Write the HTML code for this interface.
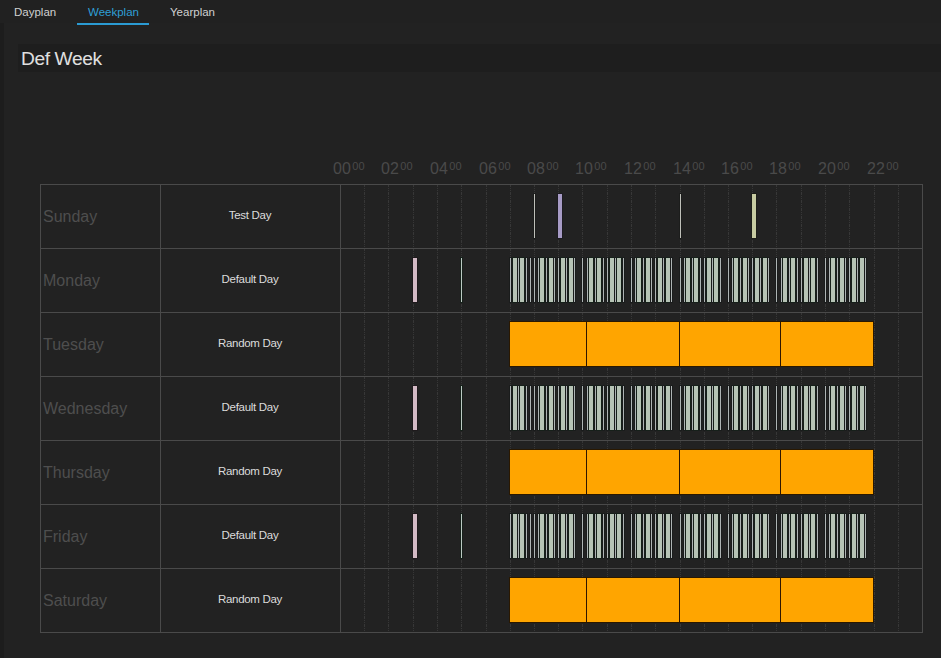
<!DOCTYPE html>
<html><head><meta charset="utf-8"><style>
html,body{margin:0;padding:0;width:941px;height:658px;overflow:hidden;background:#212121;font-family:"Liberation Sans",sans-serif;}
.strip{position:absolute;left:0;top:23px;width:4px;height:635px;background:#1d1d1d;}
.panel{position:absolute;left:4px;top:23px;width:937px;height:635px;background:#222222;}
.tab{position:absolute;top:5px;font-size:11.5px;line-height:14px;color:#d0d0d0;white-space:nowrap;}
.tab.act{color:#2f9fd6;}
.uline{position:absolute;left:77px;top:23px;width:72px;height:2px;background:#2b9bd3;}
.hdr{position:absolute;left:18px;top:44px;width:923px;height:28px;background:#1e1e1e;}
.hdrt{position:absolute;left:21px;top:48px;font-size:19.2px;letter-spacing:-0.4px;line-height:22px;color:#e0e0e0;white-space:nowrap;}
.tl{position:absolute;top:159px;font-size:16px;line-height:19px;color:#4a4a4a;white-space:nowrap;}
.tl sup{font-size:11px;vertical-align:0;position:relative;top:-4px;margin-left:1.5px;}
.dn{position:absolute;left:43px;font-size:16px;line-height:19px;color:#4e4e4e;white-space:nowrap;}
.pn{position:absolute;left:160px;width:180px;text-align:center;font-size:11.5px;letter-spacing:-0.3px;line-height:14px;color:#dcdcdc;white-space:nowrap;}
svg{position:absolute;left:0;top:0;}
</style></head><body>
<div class="strip"></div>
<div class="panel"></div>
<div class="tab" style="left:14px">Dayplan</div>
<div class="tab act" style="left:88px">Weekplan</div>
<div class="tab" style="left:170px">Yearplan</div>
<div class="uline"></div>
<div class="hdr"></div>
<div class="hdrt">Def Week</div>
<div class="tl" style="left:333px">00<sup>00</sup></div><div class="tl" style="left:381px">02<sup>00</sup></div><div class="tl" style="left:430px">04<sup>00</sup></div><div class="tl" style="left:479px">06<sup>00</sup></div><div class="tl" style="left:527px">08<sup>00</sup></div><div class="tl" style="left:575px">10<sup>00</sup></div><div class="tl" style="left:624px">12<sup>00</sup></div><div class="tl" style="left:673px">14<sup>00</sup></div><div class="tl" style="left:721px">16<sup>00</sup></div><div class="tl" style="left:769px">18<sup>00</sup></div><div class="tl" style="left:818px">20<sup>00</sup></div><div class="tl" style="left:867px">22<sup>00</sup></div>
<svg width="941" height="658" shape-rendering="crispEdges">
<defs><pattern id="dash" x="0" y="0" width="1" height="8" patternUnits="userSpaceOnUse">
<rect x="0" y="0" width="1" height="3" fill="#373737"/><rect x="0" y="4" width="1" height="1" fill="#373737"/><rect x="0" y="6" width="1" height="1" fill="#373737"/>
</pattern></defs>
<rect x="364" y="185" width="1" height="446" fill="url(#dash)"/><rect x="388" y="185" width="1" height="446" fill="url(#dash)"/><rect x="413" y="185" width="1" height="446" fill="url(#dash)"/><rect x="437" y="185" width="1" height="446" fill="url(#dash)"/><rect x="461" y="185" width="1" height="446" fill="url(#dash)"/><rect x="486" y="185" width="1" height="446" fill="url(#dash)"/><rect x="510" y="185" width="1" height="446" fill="url(#dash)"/><rect x="534" y="185" width="1" height="446" fill="url(#dash)"/><rect x="558" y="185" width="1" height="446" fill="url(#dash)"/><rect x="582" y="185" width="1" height="446" fill="url(#dash)"/><rect x="607" y="185" width="1" height="446" fill="url(#dash)"/><rect x="631" y="185" width="1" height="446" fill="url(#dash)"/><rect x="655" y="185" width="1" height="446" fill="url(#dash)"/><rect x="680" y="185" width="1" height="446" fill="url(#dash)"/><rect x="704" y="185" width="1" height="446" fill="url(#dash)"/><rect x="728" y="185" width="1" height="446" fill="url(#dash)"/><rect x="752" y="185" width="1" height="446" fill="url(#dash)"/><rect x="776" y="185" width="1" height="446" fill="url(#dash)"/><rect x="801" y="185" width="1" height="446" fill="url(#dash)"/><rect x="825" y="185" width="1" height="446" fill="url(#dash)"/><rect x="849" y="185" width="1" height="446" fill="url(#dash)"/><rect x="874" y="185" width="1" height="446" fill="url(#dash)"/><rect x="898" y="185" width="1" height="446" fill="url(#dash)"/><rect x="40" y="184" width="883" height="1" fill="#4a4a4a"/><rect x="40" y="248" width="883" height="1" fill="#4a4a4a"/><rect x="40" y="312" width="883" height="1" fill="#4a4a4a"/><rect x="40" y="376" width="883" height="1" fill="#4a4a4a"/><rect x="40" y="440" width="883" height="1" fill="#4a4a4a"/><rect x="40" y="504" width="883" height="1" fill="#4a4a4a"/><rect x="40" y="568" width="883" height="1" fill="#4a4a4a"/><rect x="40" y="632" width="883" height="1" fill="#4a4a4a"/><rect x="40" y="184" width="1" height="449" fill="#4a4a4a"/><rect x="160" y="184" width="1" height="449" fill="#4a4a4a"/><rect x="340" y="184" width="1" height="449" fill="#4a4a4a"/><rect x="922" y="184" width="1" height="449" fill="#4a4a4a"/><rect x="533" y="193" width="3" height="46" fill="#1c1d1c"/><rect x="557" y="193" width="6" height="46" fill="#1c1b20"/><rect x="679" y="193" width="3" height="46" fill="#1c1d1c"/><rect x="751" y="193" width="6" height="46" fill="#1c1d18"/><rect x="534" y="194" width="1" height="44" fill="#bfc0ba"/><rect x="558" y="194" width="4" height="44" fill="#a79bc6"/><rect x="680" y="194" width="1" height="44" fill="#bfc0ba"/><rect x="752" y="194" width="4" height="44" fill="#c7cba1"/><rect x="412" y="257" width="6" height="46" fill="#1e1a1c"/><rect x="460" y="257" width="3" height="46" fill="#16201a"/><rect x="509" y="257" width="3" height="46" fill="#1a1c1c"/><rect x="512" y="257" width="6" height="46" fill="#16201a"/><rect x="517" y="257" width="3" height="46" fill="#1a1c1c"/><rect x="519" y="257" width="6" height="46" fill="#16201a"/><rect x="525" y="257" width="3" height="46" fill="#1a1c1c"/><rect x="529" y="257" width="3" height="46" fill="#1a1c1c"/><rect x="533" y="257" width="3" height="46" fill="#1a1c1c"/><rect x="537" y="257" width="3" height="46" fill="#1a1c1c"/><rect x="539" y="257" width="6" height="46" fill="#16201a"/><rect x="545" y="257" width="3" height="46" fill="#1a1c1c"/><rect x="548" y="257" width="6" height="46" fill="#16201a"/><rect x="553" y="257" width="3" height="46" fill="#1a1c1c"/><rect x="557" y="257" width="3" height="46" fill="#1a1c1c"/><rect x="560" y="257" width="6" height="46" fill="#16201a"/><rect x="565" y="257" width="3" height="46" fill="#1a1c1c"/><rect x="568" y="257" width="6" height="46" fill="#16201a"/><rect x="573" y="257" width="3" height="46" fill="#1a1c1c"/><rect x="581" y="257" width="3" height="46" fill="#1a1c1c"/><rect x="586" y="257" width="3" height="46" fill="#1a1c1c"/><rect x="588" y="257" width="6" height="46" fill="#16201a"/><rect x="594" y="257" width="3" height="46" fill="#1a1c1c"/><rect x="596" y="257" width="6" height="46" fill="#16201a"/><rect x="602" y="257" width="3" height="46" fill="#1a1c1c"/><rect x="606" y="257" width="3" height="46" fill="#1a1c1c"/><rect x="609" y="257" width="6" height="46" fill="#16201a"/><rect x="614" y="257" width="3" height="46" fill="#1a1c1c"/><rect x="616" y="257" width="6" height="46" fill="#16201a"/><rect x="622" y="257" width="3" height="46" fill="#1a1c1c"/><rect x="630" y="257" width="3" height="46" fill="#1a1c1c"/><rect x="634" y="257" width="3" height="46" fill="#1a1c1c"/><rect x="636" y="257" width="6" height="46" fill="#16201a"/><rect x="642" y="257" width="3" height="46" fill="#1a1c1c"/><rect x="645" y="257" width="6" height="46" fill="#16201a"/><rect x="650" y="257" width="3" height="46" fill="#1a1c1c"/><rect x="654" y="257" width="3" height="46" fill="#1a1c1c"/><rect x="657" y="257" width="6" height="46" fill="#16201a"/><rect x="662" y="257" width="3" height="46" fill="#1a1c1c"/><rect x="665" y="257" width="6" height="46" fill="#16201a"/><rect x="670" y="257" width="3" height="46" fill="#1a1c1c"/><rect x="679" y="257" width="3" height="46" fill="#1a1c1c"/><rect x="683" y="257" width="3" height="46" fill="#1a1c1c"/><rect x="685" y="257" width="6" height="46" fill="#16201a"/><rect x="691" y="257" width="3" height="46" fill="#1a1c1c"/><rect x="693" y="257" width="6" height="46" fill="#16201a"/><rect x="699" y="257" width="3" height="46" fill="#1a1c1c"/><rect x="703" y="257" width="3" height="46" fill="#1a1c1c"/><rect x="706" y="257" width="6" height="46" fill="#16201a"/><rect x="711" y="257" width="3" height="46" fill="#1a1c1c"/><rect x="713" y="257" width="6" height="46" fill="#16201a"/><rect x="719" y="257" width="3" height="46" fill="#1a1c1c"/><rect x="727" y="257" width="3" height="46" fill="#1a1c1c"/><rect x="731" y="257" width="3" height="46" fill="#1a1c1c"/><rect x="733" y="257" width="6" height="46" fill="#16201a"/><rect x="739" y="257" width="3" height="46" fill="#1a1c1c"/><rect x="742" y="257" width="6" height="46" fill="#16201a"/><rect x="747" y="257" width="3" height="46" fill="#1a1c1c"/><rect x="751" y="257" width="3" height="46" fill="#1a1c1c"/><rect x="754" y="257" width="6" height="46" fill="#16201a"/><rect x="759" y="257" width="3" height="46" fill="#1a1c1c"/><rect x="762" y="257" width="6" height="46" fill="#16201a"/><rect x="767" y="257" width="3" height="46" fill="#1a1c1c"/><rect x="775" y="257" width="3" height="46" fill="#1a1c1c"/><rect x="780" y="257" width="3" height="46" fill="#1a1c1c"/><rect x="782" y="257" width="6" height="46" fill="#16201a"/><rect x="788" y="257" width="3" height="46" fill="#1a1c1c"/><rect x="790" y="257" width="6" height="46" fill="#16201a"/><rect x="796" y="257" width="3" height="46" fill="#1a1c1c"/><rect x="800" y="257" width="3" height="46" fill="#1a1c1c"/><rect x="803" y="257" width="6" height="46" fill="#16201a"/><rect x="808" y="257" width="3" height="46" fill="#1a1c1c"/><rect x="810" y="257" width="6" height="46" fill="#16201a"/><rect x="816" y="257" width="3" height="46" fill="#1a1c1c"/><rect x="824" y="257" width="3" height="46" fill="#1a1c1c"/><rect x="828" y="257" width="3" height="46" fill="#1a1c1c"/><rect x="830" y="257" width="6" height="46" fill="#16201a"/><rect x="836" y="257" width="3" height="46" fill="#1a1c1c"/><rect x="839" y="257" width="6" height="46" fill="#16201a"/><rect x="844" y="257" width="3" height="46" fill="#1a1c1c"/><rect x="848" y="257" width="3" height="46" fill="#1a1c1c"/><rect x="851" y="257" width="6" height="46" fill="#16201a"/><rect x="856" y="257" width="3" height="46" fill="#1a1c1c"/><rect x="859" y="257" width="6" height="46" fill="#16201a"/><rect x="864" y="257" width="3" height="46" fill="#1a1c1c"/><rect x="413" y="258" width="4" height="44" fill="#d3bac5"/><rect x="461" y="258" width="1" height="44" fill="#bccac4"/><rect x="510" y="258" width="1" height="44" fill="#aeb4b4"/><rect x="513" y="258" width="4" height="44" fill="#b6c3b5"/><rect x="518" y="258" width="1" height="44" fill="#aeb4b4"/><rect x="520" y="258" width="4" height="44" fill="#b6c3b5"/><rect x="526" y="258" width="1" height="44" fill="#aeb4b4"/><rect x="530" y="258" width="1" height="44" fill="#aeb4b4"/><rect x="534" y="258" width="1" height="44" fill="#aeb4b4"/><rect x="538" y="258" width="1" height="44" fill="#aeb4b4"/><rect x="540" y="258" width="4" height="44" fill="#b6c3b5"/><rect x="546" y="258" width="1" height="44" fill="#aeb4b4"/><rect x="549" y="258" width="4" height="44" fill="#b6c3b5"/><rect x="554" y="258" width="1" height="44" fill="#aeb4b4"/><rect x="558" y="258" width="1" height="44" fill="#aeb4b4"/><rect x="561" y="258" width="4" height="44" fill="#b6c3b5"/><rect x="566" y="258" width="1" height="44" fill="#aeb4b4"/><rect x="569" y="258" width="4" height="44" fill="#b6c3b5"/><rect x="574" y="258" width="1" height="44" fill="#aeb4b4"/><rect x="582" y="258" width="1" height="44" fill="#aeb4b4"/><rect x="587" y="258" width="1" height="44" fill="#aeb4b4"/><rect x="589" y="258" width="4" height="44" fill="#b6c3b5"/><rect x="595" y="258" width="1" height="44" fill="#aeb4b4"/><rect x="597" y="258" width="4" height="44" fill="#b6c3b5"/><rect x="603" y="258" width="1" height="44" fill="#aeb4b4"/><rect x="607" y="258" width="1" height="44" fill="#aeb4b4"/><rect x="610" y="258" width="4" height="44" fill="#b6c3b5"/><rect x="615" y="258" width="1" height="44" fill="#aeb4b4"/><rect x="617" y="258" width="4" height="44" fill="#b6c3b5"/><rect x="623" y="258" width="1" height="44" fill="#aeb4b4"/><rect x="631" y="258" width="1" height="44" fill="#aeb4b4"/><rect x="635" y="258" width="1" height="44" fill="#aeb4b4"/><rect x="637" y="258" width="4" height="44" fill="#b6c3b5"/><rect x="643" y="258" width="1" height="44" fill="#aeb4b4"/><rect x="646" y="258" width="4" height="44" fill="#b6c3b5"/><rect x="651" y="258" width="1" height="44" fill="#aeb4b4"/><rect x="655" y="258" width="1" height="44" fill="#aeb4b4"/><rect x="658" y="258" width="4" height="44" fill="#b6c3b5"/><rect x="663" y="258" width="1" height="44" fill="#aeb4b4"/><rect x="666" y="258" width="4" height="44" fill="#b6c3b5"/><rect x="671" y="258" width="1" height="44" fill="#aeb4b4"/><rect x="680" y="258" width="1" height="44" fill="#aeb4b4"/><rect x="684" y="258" width="1" height="44" fill="#aeb4b4"/><rect x="686" y="258" width="4" height="44" fill="#b6c3b5"/><rect x="692" y="258" width="1" height="44" fill="#aeb4b4"/><rect x="694" y="258" width="4" height="44" fill="#b6c3b5"/><rect x="700" y="258" width="1" height="44" fill="#aeb4b4"/><rect x="704" y="258" width="1" height="44" fill="#aeb4b4"/><rect x="707" y="258" width="4" height="44" fill="#b6c3b5"/><rect x="712" y="258" width="1" height="44" fill="#aeb4b4"/><rect x="714" y="258" width="4" height="44" fill="#b6c3b5"/><rect x="720" y="258" width="1" height="44" fill="#aeb4b4"/><rect x="728" y="258" width="1" height="44" fill="#aeb4b4"/><rect x="732" y="258" width="1" height="44" fill="#aeb4b4"/><rect x="734" y="258" width="4" height="44" fill="#b6c3b5"/><rect x="740" y="258" width="1" height="44" fill="#aeb4b4"/><rect x="743" y="258" width="4" height="44" fill="#b6c3b5"/><rect x="748" y="258" width="1" height="44" fill="#aeb4b4"/><rect x="752" y="258" width="1" height="44" fill="#aeb4b4"/><rect x="755" y="258" width="4" height="44" fill="#b6c3b5"/><rect x="760" y="258" width="1" height="44" fill="#aeb4b4"/><rect x="763" y="258" width="4" height="44" fill="#b6c3b5"/><rect x="768" y="258" width="1" height="44" fill="#aeb4b4"/><rect x="776" y="258" width="1" height="44" fill="#aeb4b4"/><rect x="781" y="258" width="1" height="44" fill="#aeb4b4"/><rect x="783" y="258" width="4" height="44" fill="#b6c3b5"/><rect x="789" y="258" width="1" height="44" fill="#aeb4b4"/><rect x="791" y="258" width="4" height="44" fill="#b6c3b5"/><rect x="797" y="258" width="1" height="44" fill="#aeb4b4"/><rect x="801" y="258" width="1" height="44" fill="#aeb4b4"/><rect x="804" y="258" width="4" height="44" fill="#b6c3b5"/><rect x="809" y="258" width="1" height="44" fill="#aeb4b4"/><rect x="811" y="258" width="4" height="44" fill="#b6c3b5"/><rect x="817" y="258" width="1" height="44" fill="#aeb4b4"/><rect x="825" y="258" width="1" height="44" fill="#aeb4b4"/><rect x="829" y="258" width="1" height="44" fill="#aeb4b4"/><rect x="831" y="258" width="4" height="44" fill="#b6c3b5"/><rect x="837" y="258" width="1" height="44" fill="#aeb4b4"/><rect x="840" y="258" width="4" height="44" fill="#b6c3b5"/><rect x="845" y="258" width="1" height="44" fill="#aeb4b4"/><rect x="849" y="258" width="1" height="44" fill="#aeb4b4"/><rect x="852" y="258" width="4" height="44" fill="#b6c3b5"/><rect x="857" y="258" width="1" height="44" fill="#aeb4b4"/><rect x="860" y="258" width="4" height="44" fill="#b6c3b5"/><rect x="865" y="258" width="1" height="44" fill="#aeb4b4"/><rect x="509" y="321" width="365" height="46" fill="#2a1800"/><rect x="510" y="322" width="363" height="44" fill="#ffa500"/><rect x="586" y="322" width="1" height="44" fill="#2e1600"/><rect x="679" y="322" width="1" height="44" fill="#2e1600"/><rect x="780" y="322" width="1" height="44" fill="#2e1600"/><rect x="412" y="385" width="6" height="46" fill="#1e1a1c"/><rect x="460" y="385" width="3" height="46" fill="#16201a"/><rect x="509" y="385" width="3" height="46" fill="#1a1c1c"/><rect x="512" y="385" width="6" height="46" fill="#16201a"/><rect x="517" y="385" width="3" height="46" fill="#1a1c1c"/><rect x="519" y="385" width="6" height="46" fill="#16201a"/><rect x="525" y="385" width="3" height="46" fill="#1a1c1c"/><rect x="529" y="385" width="3" height="46" fill="#1a1c1c"/><rect x="533" y="385" width="3" height="46" fill="#1a1c1c"/><rect x="537" y="385" width="3" height="46" fill="#1a1c1c"/><rect x="539" y="385" width="6" height="46" fill="#16201a"/><rect x="545" y="385" width="3" height="46" fill="#1a1c1c"/><rect x="548" y="385" width="6" height="46" fill="#16201a"/><rect x="553" y="385" width="3" height="46" fill="#1a1c1c"/><rect x="557" y="385" width="3" height="46" fill="#1a1c1c"/><rect x="560" y="385" width="6" height="46" fill="#16201a"/><rect x="565" y="385" width="3" height="46" fill="#1a1c1c"/><rect x="568" y="385" width="6" height="46" fill="#16201a"/><rect x="573" y="385" width="3" height="46" fill="#1a1c1c"/><rect x="581" y="385" width="3" height="46" fill="#1a1c1c"/><rect x="586" y="385" width="3" height="46" fill="#1a1c1c"/><rect x="588" y="385" width="6" height="46" fill="#16201a"/><rect x="594" y="385" width="3" height="46" fill="#1a1c1c"/><rect x="596" y="385" width="6" height="46" fill="#16201a"/><rect x="602" y="385" width="3" height="46" fill="#1a1c1c"/><rect x="606" y="385" width="3" height="46" fill="#1a1c1c"/><rect x="609" y="385" width="6" height="46" fill="#16201a"/><rect x="614" y="385" width="3" height="46" fill="#1a1c1c"/><rect x="616" y="385" width="6" height="46" fill="#16201a"/><rect x="622" y="385" width="3" height="46" fill="#1a1c1c"/><rect x="630" y="385" width="3" height="46" fill="#1a1c1c"/><rect x="634" y="385" width="3" height="46" fill="#1a1c1c"/><rect x="636" y="385" width="6" height="46" fill="#16201a"/><rect x="642" y="385" width="3" height="46" fill="#1a1c1c"/><rect x="645" y="385" width="6" height="46" fill="#16201a"/><rect x="650" y="385" width="3" height="46" fill="#1a1c1c"/><rect x="654" y="385" width="3" height="46" fill="#1a1c1c"/><rect x="657" y="385" width="6" height="46" fill="#16201a"/><rect x="662" y="385" width="3" height="46" fill="#1a1c1c"/><rect x="665" y="385" width="6" height="46" fill="#16201a"/><rect x="670" y="385" width="3" height="46" fill="#1a1c1c"/><rect x="679" y="385" width="3" height="46" fill="#1a1c1c"/><rect x="683" y="385" width="3" height="46" fill="#1a1c1c"/><rect x="685" y="385" width="6" height="46" fill="#16201a"/><rect x="691" y="385" width="3" height="46" fill="#1a1c1c"/><rect x="693" y="385" width="6" height="46" fill="#16201a"/><rect x="699" y="385" width="3" height="46" fill="#1a1c1c"/><rect x="703" y="385" width="3" height="46" fill="#1a1c1c"/><rect x="706" y="385" width="6" height="46" fill="#16201a"/><rect x="711" y="385" width="3" height="46" fill="#1a1c1c"/><rect x="713" y="385" width="6" height="46" fill="#16201a"/><rect x="719" y="385" width="3" height="46" fill="#1a1c1c"/><rect x="727" y="385" width="3" height="46" fill="#1a1c1c"/><rect x="731" y="385" width="3" height="46" fill="#1a1c1c"/><rect x="733" y="385" width="6" height="46" fill="#16201a"/><rect x="739" y="385" width="3" height="46" fill="#1a1c1c"/><rect x="742" y="385" width="6" height="46" fill="#16201a"/><rect x="747" y="385" width="3" height="46" fill="#1a1c1c"/><rect x="751" y="385" width="3" height="46" fill="#1a1c1c"/><rect x="754" y="385" width="6" height="46" fill="#16201a"/><rect x="759" y="385" width="3" height="46" fill="#1a1c1c"/><rect x="762" y="385" width="6" height="46" fill="#16201a"/><rect x="767" y="385" width="3" height="46" fill="#1a1c1c"/><rect x="775" y="385" width="3" height="46" fill="#1a1c1c"/><rect x="780" y="385" width="3" height="46" fill="#1a1c1c"/><rect x="782" y="385" width="6" height="46" fill="#16201a"/><rect x="788" y="385" width="3" height="46" fill="#1a1c1c"/><rect x="790" y="385" width="6" height="46" fill="#16201a"/><rect x="796" y="385" width="3" height="46" fill="#1a1c1c"/><rect x="800" y="385" width="3" height="46" fill="#1a1c1c"/><rect x="803" y="385" width="6" height="46" fill="#16201a"/><rect x="808" y="385" width="3" height="46" fill="#1a1c1c"/><rect x="810" y="385" width="6" height="46" fill="#16201a"/><rect x="816" y="385" width="3" height="46" fill="#1a1c1c"/><rect x="824" y="385" width="3" height="46" fill="#1a1c1c"/><rect x="828" y="385" width="3" height="46" fill="#1a1c1c"/><rect x="830" y="385" width="6" height="46" fill="#16201a"/><rect x="836" y="385" width="3" height="46" fill="#1a1c1c"/><rect x="839" y="385" width="6" height="46" fill="#16201a"/><rect x="844" y="385" width="3" height="46" fill="#1a1c1c"/><rect x="848" y="385" width="3" height="46" fill="#1a1c1c"/><rect x="851" y="385" width="6" height="46" fill="#16201a"/><rect x="856" y="385" width="3" height="46" fill="#1a1c1c"/><rect x="859" y="385" width="6" height="46" fill="#16201a"/><rect x="864" y="385" width="3" height="46" fill="#1a1c1c"/><rect x="413" y="386" width="4" height="44" fill="#d3bac5"/><rect x="461" y="386" width="1" height="44" fill="#bccac4"/><rect x="510" y="386" width="1" height="44" fill="#aeb4b4"/><rect x="513" y="386" width="4" height="44" fill="#b6c3b5"/><rect x="518" y="386" width="1" height="44" fill="#aeb4b4"/><rect x="520" y="386" width="4" height="44" fill="#b6c3b5"/><rect x="526" y="386" width="1" height="44" fill="#aeb4b4"/><rect x="530" y="386" width="1" height="44" fill="#aeb4b4"/><rect x="534" y="386" width="1" height="44" fill="#aeb4b4"/><rect x="538" y="386" width="1" height="44" fill="#aeb4b4"/><rect x="540" y="386" width="4" height="44" fill="#b6c3b5"/><rect x="546" y="386" width="1" height="44" fill="#aeb4b4"/><rect x="549" y="386" width="4" height="44" fill="#b6c3b5"/><rect x="554" y="386" width="1" height="44" fill="#aeb4b4"/><rect x="558" y="386" width="1" height="44" fill="#aeb4b4"/><rect x="561" y="386" width="4" height="44" fill="#b6c3b5"/><rect x="566" y="386" width="1" height="44" fill="#aeb4b4"/><rect x="569" y="386" width="4" height="44" fill="#b6c3b5"/><rect x="574" y="386" width="1" height="44" fill="#aeb4b4"/><rect x="582" y="386" width="1" height="44" fill="#aeb4b4"/><rect x="587" y="386" width="1" height="44" fill="#aeb4b4"/><rect x="589" y="386" width="4" height="44" fill="#b6c3b5"/><rect x="595" y="386" width="1" height="44" fill="#aeb4b4"/><rect x="597" y="386" width="4" height="44" fill="#b6c3b5"/><rect x="603" y="386" width="1" height="44" fill="#aeb4b4"/><rect x="607" y="386" width="1" height="44" fill="#aeb4b4"/><rect x="610" y="386" width="4" height="44" fill="#b6c3b5"/><rect x="615" y="386" width="1" height="44" fill="#aeb4b4"/><rect x="617" y="386" width="4" height="44" fill="#b6c3b5"/><rect x="623" y="386" width="1" height="44" fill="#aeb4b4"/><rect x="631" y="386" width="1" height="44" fill="#aeb4b4"/><rect x="635" y="386" width="1" height="44" fill="#aeb4b4"/><rect x="637" y="386" width="4" height="44" fill="#b6c3b5"/><rect x="643" y="386" width="1" height="44" fill="#aeb4b4"/><rect x="646" y="386" width="4" height="44" fill="#b6c3b5"/><rect x="651" y="386" width="1" height="44" fill="#aeb4b4"/><rect x="655" y="386" width="1" height="44" fill="#aeb4b4"/><rect x="658" y="386" width="4" height="44" fill="#b6c3b5"/><rect x="663" y="386" width="1" height="44" fill="#aeb4b4"/><rect x="666" y="386" width="4" height="44" fill="#b6c3b5"/><rect x="671" y="386" width="1" height="44" fill="#aeb4b4"/><rect x="680" y="386" width="1" height="44" fill="#aeb4b4"/><rect x="684" y="386" width="1" height="44" fill="#aeb4b4"/><rect x="686" y="386" width="4" height="44" fill="#b6c3b5"/><rect x="692" y="386" width="1" height="44" fill="#aeb4b4"/><rect x="694" y="386" width="4" height="44" fill="#b6c3b5"/><rect x="700" y="386" width="1" height="44" fill="#aeb4b4"/><rect x="704" y="386" width="1" height="44" fill="#aeb4b4"/><rect x="707" y="386" width="4" height="44" fill="#b6c3b5"/><rect x="712" y="386" width="1" height="44" fill="#aeb4b4"/><rect x="714" y="386" width="4" height="44" fill="#b6c3b5"/><rect x="720" y="386" width="1" height="44" fill="#aeb4b4"/><rect x="728" y="386" width="1" height="44" fill="#aeb4b4"/><rect x="732" y="386" width="1" height="44" fill="#aeb4b4"/><rect x="734" y="386" width="4" height="44" fill="#b6c3b5"/><rect x="740" y="386" width="1" height="44" fill="#aeb4b4"/><rect x="743" y="386" width="4" height="44" fill="#b6c3b5"/><rect x="748" y="386" width="1" height="44" fill="#aeb4b4"/><rect x="752" y="386" width="1" height="44" fill="#aeb4b4"/><rect x="755" y="386" width="4" height="44" fill="#b6c3b5"/><rect x="760" y="386" width="1" height="44" fill="#aeb4b4"/><rect x="763" y="386" width="4" height="44" fill="#b6c3b5"/><rect x="768" y="386" width="1" height="44" fill="#aeb4b4"/><rect x="776" y="386" width="1" height="44" fill="#aeb4b4"/><rect x="781" y="386" width="1" height="44" fill="#aeb4b4"/><rect x="783" y="386" width="4" height="44" fill="#b6c3b5"/><rect x="789" y="386" width="1" height="44" fill="#aeb4b4"/><rect x="791" y="386" width="4" height="44" fill="#b6c3b5"/><rect x="797" y="386" width="1" height="44" fill="#aeb4b4"/><rect x="801" y="386" width="1" height="44" fill="#aeb4b4"/><rect x="804" y="386" width="4" height="44" fill="#b6c3b5"/><rect x="809" y="386" width="1" height="44" fill="#aeb4b4"/><rect x="811" y="386" width="4" height="44" fill="#b6c3b5"/><rect x="817" y="386" width="1" height="44" fill="#aeb4b4"/><rect x="825" y="386" width="1" height="44" fill="#aeb4b4"/><rect x="829" y="386" width="1" height="44" fill="#aeb4b4"/><rect x="831" y="386" width="4" height="44" fill="#b6c3b5"/><rect x="837" y="386" width="1" height="44" fill="#aeb4b4"/><rect x="840" y="386" width="4" height="44" fill="#b6c3b5"/><rect x="845" y="386" width="1" height="44" fill="#aeb4b4"/><rect x="849" y="386" width="1" height="44" fill="#aeb4b4"/><rect x="852" y="386" width="4" height="44" fill="#b6c3b5"/><rect x="857" y="386" width="1" height="44" fill="#aeb4b4"/><rect x="860" y="386" width="4" height="44" fill="#b6c3b5"/><rect x="865" y="386" width="1" height="44" fill="#aeb4b4"/><rect x="509" y="449" width="365" height="46" fill="#2a1800"/><rect x="510" y="450" width="363" height="44" fill="#ffa500"/><rect x="586" y="450" width="1" height="44" fill="#2e1600"/><rect x="679" y="450" width="1" height="44" fill="#2e1600"/><rect x="780" y="450" width="1" height="44" fill="#2e1600"/><rect x="412" y="513" width="6" height="46" fill="#1e1a1c"/><rect x="460" y="513" width="3" height="46" fill="#16201a"/><rect x="509" y="513" width="3" height="46" fill="#1a1c1c"/><rect x="512" y="513" width="6" height="46" fill="#16201a"/><rect x="517" y="513" width="3" height="46" fill="#1a1c1c"/><rect x="519" y="513" width="6" height="46" fill="#16201a"/><rect x="525" y="513" width="3" height="46" fill="#1a1c1c"/><rect x="529" y="513" width="3" height="46" fill="#1a1c1c"/><rect x="533" y="513" width="3" height="46" fill="#1a1c1c"/><rect x="537" y="513" width="3" height="46" fill="#1a1c1c"/><rect x="539" y="513" width="6" height="46" fill="#16201a"/><rect x="545" y="513" width="3" height="46" fill="#1a1c1c"/><rect x="548" y="513" width="6" height="46" fill="#16201a"/><rect x="553" y="513" width="3" height="46" fill="#1a1c1c"/><rect x="557" y="513" width="3" height="46" fill="#1a1c1c"/><rect x="560" y="513" width="6" height="46" fill="#16201a"/><rect x="565" y="513" width="3" height="46" fill="#1a1c1c"/><rect x="568" y="513" width="6" height="46" fill="#16201a"/><rect x="573" y="513" width="3" height="46" fill="#1a1c1c"/><rect x="581" y="513" width="3" height="46" fill="#1a1c1c"/><rect x="586" y="513" width="3" height="46" fill="#1a1c1c"/><rect x="588" y="513" width="6" height="46" fill="#16201a"/><rect x="594" y="513" width="3" height="46" fill="#1a1c1c"/><rect x="596" y="513" width="6" height="46" fill="#16201a"/><rect x="602" y="513" width="3" height="46" fill="#1a1c1c"/><rect x="606" y="513" width="3" height="46" fill="#1a1c1c"/><rect x="609" y="513" width="6" height="46" fill="#16201a"/><rect x="614" y="513" width="3" height="46" fill="#1a1c1c"/><rect x="616" y="513" width="6" height="46" fill="#16201a"/><rect x="622" y="513" width="3" height="46" fill="#1a1c1c"/><rect x="630" y="513" width="3" height="46" fill="#1a1c1c"/><rect x="634" y="513" width="3" height="46" fill="#1a1c1c"/><rect x="636" y="513" width="6" height="46" fill="#16201a"/><rect x="642" y="513" width="3" height="46" fill="#1a1c1c"/><rect x="645" y="513" width="6" height="46" fill="#16201a"/><rect x="650" y="513" width="3" height="46" fill="#1a1c1c"/><rect x="654" y="513" width="3" height="46" fill="#1a1c1c"/><rect x="657" y="513" width="6" height="46" fill="#16201a"/><rect x="662" y="513" width="3" height="46" fill="#1a1c1c"/><rect x="665" y="513" width="6" height="46" fill="#16201a"/><rect x="670" y="513" width="3" height="46" fill="#1a1c1c"/><rect x="679" y="513" width="3" height="46" fill="#1a1c1c"/><rect x="683" y="513" width="3" height="46" fill="#1a1c1c"/><rect x="685" y="513" width="6" height="46" fill="#16201a"/><rect x="691" y="513" width="3" height="46" fill="#1a1c1c"/><rect x="693" y="513" width="6" height="46" fill="#16201a"/><rect x="699" y="513" width="3" height="46" fill="#1a1c1c"/><rect x="703" y="513" width="3" height="46" fill="#1a1c1c"/><rect x="706" y="513" width="6" height="46" fill="#16201a"/><rect x="711" y="513" width="3" height="46" fill="#1a1c1c"/><rect x="713" y="513" width="6" height="46" fill="#16201a"/><rect x="719" y="513" width="3" height="46" fill="#1a1c1c"/><rect x="727" y="513" width="3" height="46" fill="#1a1c1c"/><rect x="731" y="513" width="3" height="46" fill="#1a1c1c"/><rect x="733" y="513" width="6" height="46" fill="#16201a"/><rect x="739" y="513" width="3" height="46" fill="#1a1c1c"/><rect x="742" y="513" width="6" height="46" fill="#16201a"/><rect x="747" y="513" width="3" height="46" fill="#1a1c1c"/><rect x="751" y="513" width="3" height="46" fill="#1a1c1c"/><rect x="754" y="513" width="6" height="46" fill="#16201a"/><rect x="759" y="513" width="3" height="46" fill="#1a1c1c"/><rect x="762" y="513" width="6" height="46" fill="#16201a"/><rect x="767" y="513" width="3" height="46" fill="#1a1c1c"/><rect x="775" y="513" width="3" height="46" fill="#1a1c1c"/><rect x="780" y="513" width="3" height="46" fill="#1a1c1c"/><rect x="782" y="513" width="6" height="46" fill="#16201a"/><rect x="788" y="513" width="3" height="46" fill="#1a1c1c"/><rect x="790" y="513" width="6" height="46" fill="#16201a"/><rect x="796" y="513" width="3" height="46" fill="#1a1c1c"/><rect x="800" y="513" width="3" height="46" fill="#1a1c1c"/><rect x="803" y="513" width="6" height="46" fill="#16201a"/><rect x="808" y="513" width="3" height="46" fill="#1a1c1c"/><rect x="810" y="513" width="6" height="46" fill="#16201a"/><rect x="816" y="513" width="3" height="46" fill="#1a1c1c"/><rect x="824" y="513" width="3" height="46" fill="#1a1c1c"/><rect x="828" y="513" width="3" height="46" fill="#1a1c1c"/><rect x="830" y="513" width="6" height="46" fill="#16201a"/><rect x="836" y="513" width="3" height="46" fill="#1a1c1c"/><rect x="839" y="513" width="6" height="46" fill="#16201a"/><rect x="844" y="513" width="3" height="46" fill="#1a1c1c"/><rect x="848" y="513" width="3" height="46" fill="#1a1c1c"/><rect x="851" y="513" width="6" height="46" fill="#16201a"/><rect x="856" y="513" width="3" height="46" fill="#1a1c1c"/><rect x="859" y="513" width="6" height="46" fill="#16201a"/><rect x="864" y="513" width="3" height="46" fill="#1a1c1c"/><rect x="413" y="514" width="4" height="44" fill="#d3bac5"/><rect x="461" y="514" width="1" height="44" fill="#bccac4"/><rect x="510" y="514" width="1" height="44" fill="#aeb4b4"/><rect x="513" y="514" width="4" height="44" fill="#b6c3b5"/><rect x="518" y="514" width="1" height="44" fill="#aeb4b4"/><rect x="520" y="514" width="4" height="44" fill="#b6c3b5"/><rect x="526" y="514" width="1" height="44" fill="#aeb4b4"/><rect x="530" y="514" width="1" height="44" fill="#aeb4b4"/><rect x="534" y="514" width="1" height="44" fill="#aeb4b4"/><rect x="538" y="514" width="1" height="44" fill="#aeb4b4"/><rect x="540" y="514" width="4" height="44" fill="#b6c3b5"/><rect x="546" y="514" width="1" height="44" fill="#aeb4b4"/><rect x="549" y="514" width="4" height="44" fill="#b6c3b5"/><rect x="554" y="514" width="1" height="44" fill="#aeb4b4"/><rect x="558" y="514" width="1" height="44" fill="#aeb4b4"/><rect x="561" y="514" width="4" height="44" fill="#b6c3b5"/><rect x="566" y="514" width="1" height="44" fill="#aeb4b4"/><rect x="569" y="514" width="4" height="44" fill="#b6c3b5"/><rect x="574" y="514" width="1" height="44" fill="#aeb4b4"/><rect x="582" y="514" width="1" height="44" fill="#aeb4b4"/><rect x="587" y="514" width="1" height="44" fill="#aeb4b4"/><rect x="589" y="514" width="4" height="44" fill="#b6c3b5"/><rect x="595" y="514" width="1" height="44" fill="#aeb4b4"/><rect x="597" y="514" width="4" height="44" fill="#b6c3b5"/><rect x="603" y="514" width="1" height="44" fill="#aeb4b4"/><rect x="607" y="514" width="1" height="44" fill="#aeb4b4"/><rect x="610" y="514" width="4" height="44" fill="#b6c3b5"/><rect x="615" y="514" width="1" height="44" fill="#aeb4b4"/><rect x="617" y="514" width="4" height="44" fill="#b6c3b5"/><rect x="623" y="514" width="1" height="44" fill="#aeb4b4"/><rect x="631" y="514" width="1" height="44" fill="#aeb4b4"/><rect x="635" y="514" width="1" height="44" fill="#aeb4b4"/><rect x="637" y="514" width="4" height="44" fill="#b6c3b5"/><rect x="643" y="514" width="1" height="44" fill="#aeb4b4"/><rect x="646" y="514" width="4" height="44" fill="#b6c3b5"/><rect x="651" y="514" width="1" height="44" fill="#aeb4b4"/><rect x="655" y="514" width="1" height="44" fill="#aeb4b4"/><rect x="658" y="514" width="4" height="44" fill="#b6c3b5"/><rect x="663" y="514" width="1" height="44" fill="#aeb4b4"/><rect x="666" y="514" width="4" height="44" fill="#b6c3b5"/><rect x="671" y="514" width="1" height="44" fill="#aeb4b4"/><rect x="680" y="514" width="1" height="44" fill="#aeb4b4"/><rect x="684" y="514" width="1" height="44" fill="#aeb4b4"/><rect x="686" y="514" width="4" height="44" fill="#b6c3b5"/><rect x="692" y="514" width="1" height="44" fill="#aeb4b4"/><rect x="694" y="514" width="4" height="44" fill="#b6c3b5"/><rect x="700" y="514" width="1" height="44" fill="#aeb4b4"/><rect x="704" y="514" width="1" height="44" fill="#aeb4b4"/><rect x="707" y="514" width="4" height="44" fill="#b6c3b5"/><rect x="712" y="514" width="1" height="44" fill="#aeb4b4"/><rect x="714" y="514" width="4" height="44" fill="#b6c3b5"/><rect x="720" y="514" width="1" height="44" fill="#aeb4b4"/><rect x="728" y="514" width="1" height="44" fill="#aeb4b4"/><rect x="732" y="514" width="1" height="44" fill="#aeb4b4"/><rect x="734" y="514" width="4" height="44" fill="#b6c3b5"/><rect x="740" y="514" width="1" height="44" fill="#aeb4b4"/><rect x="743" y="514" width="4" height="44" fill="#b6c3b5"/><rect x="748" y="514" width="1" height="44" fill="#aeb4b4"/><rect x="752" y="514" width="1" height="44" fill="#aeb4b4"/><rect x="755" y="514" width="4" height="44" fill="#b6c3b5"/><rect x="760" y="514" width="1" height="44" fill="#aeb4b4"/><rect x="763" y="514" width="4" height="44" fill="#b6c3b5"/><rect x="768" y="514" width="1" height="44" fill="#aeb4b4"/><rect x="776" y="514" width="1" height="44" fill="#aeb4b4"/><rect x="781" y="514" width="1" height="44" fill="#aeb4b4"/><rect x="783" y="514" width="4" height="44" fill="#b6c3b5"/><rect x="789" y="514" width="1" height="44" fill="#aeb4b4"/><rect x="791" y="514" width="4" height="44" fill="#b6c3b5"/><rect x="797" y="514" width="1" height="44" fill="#aeb4b4"/><rect x="801" y="514" width="1" height="44" fill="#aeb4b4"/><rect x="804" y="514" width="4" height="44" fill="#b6c3b5"/><rect x="809" y="514" width="1" height="44" fill="#aeb4b4"/><rect x="811" y="514" width="4" height="44" fill="#b6c3b5"/><rect x="817" y="514" width="1" height="44" fill="#aeb4b4"/><rect x="825" y="514" width="1" height="44" fill="#aeb4b4"/><rect x="829" y="514" width="1" height="44" fill="#aeb4b4"/><rect x="831" y="514" width="4" height="44" fill="#b6c3b5"/><rect x="837" y="514" width="1" height="44" fill="#aeb4b4"/><rect x="840" y="514" width="4" height="44" fill="#b6c3b5"/><rect x="845" y="514" width="1" height="44" fill="#aeb4b4"/><rect x="849" y="514" width="1" height="44" fill="#aeb4b4"/><rect x="852" y="514" width="4" height="44" fill="#b6c3b5"/><rect x="857" y="514" width="1" height="44" fill="#aeb4b4"/><rect x="860" y="514" width="4" height="44" fill="#b6c3b5"/><rect x="865" y="514" width="1" height="44" fill="#aeb4b4"/><rect x="509" y="577" width="365" height="46" fill="#2a1800"/><rect x="510" y="578" width="363" height="44" fill="#ffa500"/><rect x="586" y="578" width="1" height="44" fill="#2e1600"/><rect x="679" y="578" width="1" height="44" fill="#2e1600"/><rect x="780" y="578" width="1" height="44" fill="#2e1600"/>
</svg>
<div class="dn" style="top:207px">Sunday</div><div class="pn" style="top:208px">Test Day</div><div class="dn" style="top:271px">Monday</div><div class="pn" style="top:272px">Default Day</div><div class="dn" style="top:335px">Tuesday</div><div class="pn" style="top:336px">Random Day</div><div class="dn" style="top:399px">Wednesday</div><div class="pn" style="top:400px">Default Day</div><div class="dn" style="top:463px">Thursday</div><div class="pn" style="top:464px">Random Day</div><div class="dn" style="top:527px">Friday</div><div class="pn" style="top:528px">Default Day</div><div class="dn" style="top:591px">Saturday</div><div class="pn" style="top:592px">Random Day</div>
</body></html>
